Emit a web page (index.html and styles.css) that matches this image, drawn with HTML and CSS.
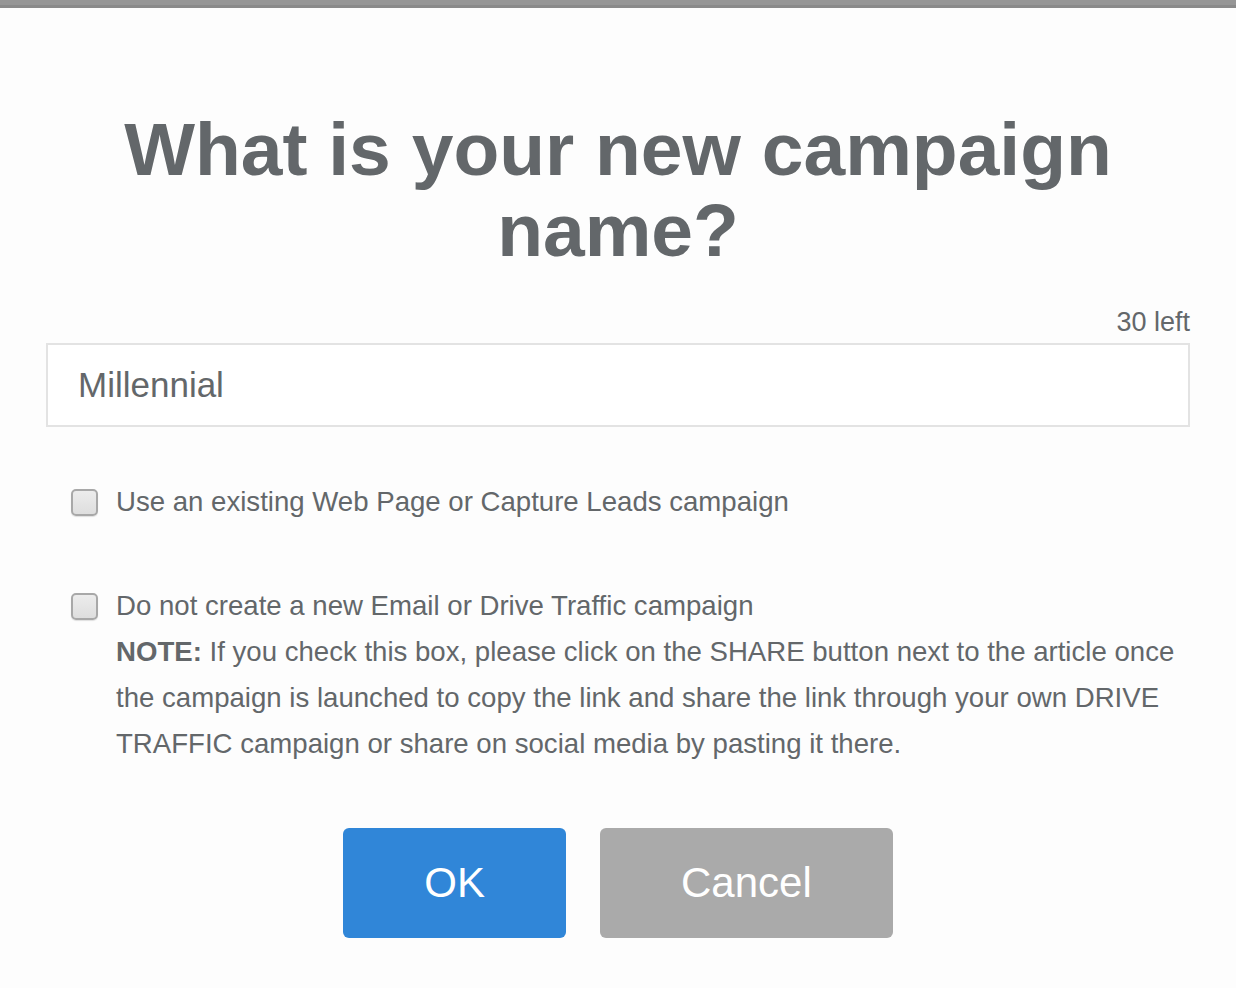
FILE: index.html
```html
<!DOCTYPE html>
<html>
<head>
<meta charset="utf-8">
<link rel="stylesheet" href="styles.css">
</head>
<body>
<div class="topbar"></div>
<main class="dialog">
  <h1 class="title">What is your new campaign name?</h1>
  <div class="counter">30 left</div>
  <div class="field">Millennial</div>
  <div class="options">
    <label class="option">
      <span class="box"></span>
      <span class="text">Use an existing Web Page or Capture Leads campaign</span>
    </label>
    <label class="option">
      <span class="box"></span>
      <span class="text">Do not create a new Email or Drive Traffic campaign<br><b>NOTE:</b> If you check this box, please click on the SHARE button next to the article once the campaign is launched to copy the link and share the link through your own DRIVE TRAFFIC campaign or share on social media by pasting it there.</span>
    </label>
  </div>
  <div class="actions">
    <button class="btn btn-ok">OK</button>
    <button class="btn btn-cancel">Cancel</button>
  </div>
</main>
</body>
</html>
```
FILE: styles.css
```css
html, body {
  margin: 0;
  padding: 0;
  background: #fdfdfd;
  font-family: "Liberation Sans", Arial, sans-serif;
  color: #63676a;
}
.topbar {
  height: 5px;
  background: #969696;
  border-bottom: 3px solid #8a8a8a;
}
.dialog {
  padding: 0 46px;
}
.title {
  margin: 101px 0 0;
  font-size: 75px;
  line-height: 81px;
  font-weight: bold;
  text-align: center;
  color: #63676a;
}
.counter {
  margin-top: 35px;
  text-align: right;
  font-size: 27px;
  line-height: 32px;
}
.field {
  margin-top: 5px;
  height: 80px;
  border: 2px solid #e3e3e3;
  background: #fff;
  padding: 0 30px;
  font-size: 35px;
  line-height: 80px;
  box-sizing: content-box;
}
.options {
  margin-top: 52px;
  padding-left: 25px;
  display: flex;
  flex-direction: column;
  gap: 58px;
}
.option {
  display: flex;
  align-items: flex-start;
  gap: 18px;
  font-size: 27.6px;
  line-height: 46px;
}
.box {
  flex: none;
  width: 23px;
  height: 23px;
  margin-top: 10px;
  border: 2px solid #a8a8a8;
  border-radius: 5px;
  background: linear-gradient(#ececec, #dedede);
  box-shadow: 0 1px 1px rgba(0,0,0,0.12);
}
.text b {
  font-weight: bold;
}
.actions {
  margin-top: 61px;
  display: flex;
  justify-content: center;
  gap: 34px;
}
.btn {
  height: 110px;
  padding: 0 81px;
  border: none;
  border-radius: 6px;
  font-family: "Liberation Sans", Arial, sans-serif;
  font-size: 42px;
  color: #fff;
}
.btn-ok {
  background: #3086d8;
}
.btn-cancel {
  background: #aaaaaa;
}
```
